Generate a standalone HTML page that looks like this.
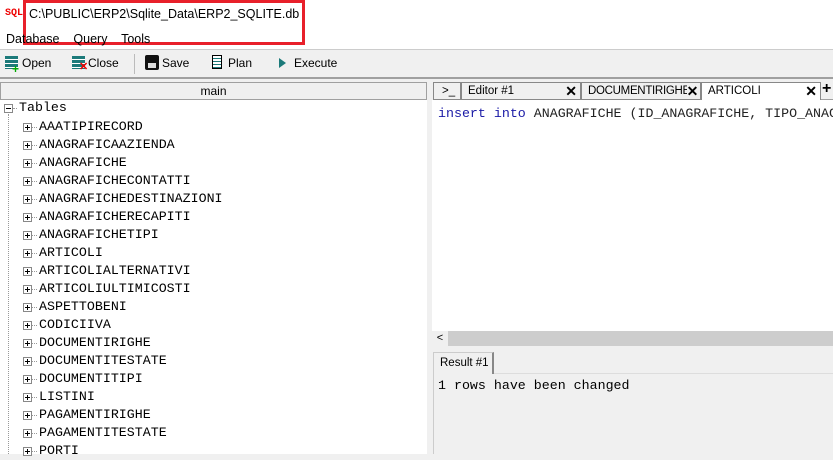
<!DOCTYPE html>
<html><head><style>
*{margin:0;padding:0;box-sizing:border-box}
body{width:833px;height:454px;overflow:hidden;background:#f0f0f0;font-family:"Liberation Sans",sans-serif;font-size:12px;color:#000;position:relative}
.abs{position:absolute}
.mono{font-family:"Liberation Mono",monospace;font-size:13.3px}
.tree div{position:absolute;left:39px;height:18px;line-height:18px;color:#000}
.pb{position:absolute;left:23px;width:9px;height:9px;border:1px solid #888;background:#fff}
.pb:before{content:"";position:absolute;left:1px;top:3px;width:5px;height:1px;background:#000}
.pb.p:after{content:"";position:absolute;left:3px;top:1px;width:1px;height:5px;background:#000}
.dh{position:absolute;left:32px;width:5px;border-top:1px dotted #999}
.tab{position:absolute;top:82px;height:18px;border:1px solid #888;line-height:16px;padding-left:6px;font-size:11.5px;white-space:nowrap;overflow:hidden}
.x{position:absolute;right:3px;top:0;font-weight:bold;font-size:14px}
</style></head><body>
<div class="abs" style="left:0;top:0;width:833px;height:50px;background:#fff"></div>
<div class="abs" style="left:5px;top:8px;color:#e00;font:bold 10px 'Liberation Mono',monospace;">SQL</div>
<div class="abs" style="left:23px;top:0;width:282px;height:45px;border:3px solid #e8202a"></div>
<div class="abs" style="left:29px;top:7px;font-size:12.5px">C:\PUBLIC\ERP2\Sqlite_Data\ERP2_SQLITE.db</div>
<div class="abs" style="left:6px;top:32px;font-size:12.5px">Database&nbsp;&nbsp;&nbsp; Query&nbsp;&nbsp;&nbsp; Tools</div>
<div class="abs" style="left:0;top:49px;width:833px;height:1px;background:#ccc"></div>
<div class="abs" style="left:5px;top:56px;width:13px;height:13px;background:repeating-linear-gradient(#1c7a7a 0 3px,#fff 3px 4px)"></div>
<div class="abs" style="left:12px;top:62px;color:#0a0;font:bold 12px sans-serif">+</div>
<div class="abs" style="left:22px;top:56px;font-size:12px">Open</div>
<div class="abs" style="left:72px;top:56px;width:13px;height:13px;background:repeating-linear-gradient(#1c7a7a 0 3px,#fff 3px 4px)"></div>
<div class="abs" style="left:79px;top:60px;color:#e00;font:bold 11px sans-serif">✕</div>
<div class="abs" style="left:88px;top:56px">Close</div>
<div class="abs" style="left:134px;top:54px;width:1px;height:20px;background:#bbb"></div>
<div class="abs" style="left:145px;top:55px;width:14px;height:15px;background:#111;border-radius:2px"></div>
<div class="abs" style="left:148px;top:63px;width:8px;height:5px;background:#ddd"></div>
<div class="abs" style="left:162px;top:56px">Save</div>
<div class="abs" style="left:212px;top:55px;width:10px;height:14px;border:1px solid #000;background:repeating-linear-gradient(#fff 0 2px,#1c7a7a 2px 3px)"></div>
<div class="abs" style="left:228px;top:56px">Plan</div>
<div class="abs" style="left:279px;top:58px;width:0;height:0;border-left:7px solid #1c7a7a;border-top:5px solid transparent;border-bottom:5px solid transparent"></div>
<div class="abs" style="left:294px;top:56px">Execute</div>
<div class="abs" style="left:0;top:77px;width:833px;height:2px;background:#a0a0a0"></div>
<div class="abs" style="left:0;top:82px;width:427px;height:18px;border:1px solid #a0a0a0;background:#f0f0f0;text-align:center;line-height:16px">main</div>
<div class="abs mono tree" style="left:0;top:100px;width:427px;height:354px;background:#fff">
<span class="pb" style="left:4px;top:4px"></span>
<span class="dh" style="left:13px;top:8px;width:4px"></span>
<div style="left:19px;top:-1px">Tables</div>
<span class="abs" style="left:8px;top:14px;height:340px;border-left:1px dotted #999"></span>
</div>
<div class="abs mono tree" id="t" style="left:0;top:100px;width:427px;height:354px"></div>
<div class="abs" style="left:433px;top:82px;width:400px;height:18px;border-bottom:1px solid #a0a0a0"></div>
<div class="tab" style="left:433px;width:28px;padding-left:8px">&gt;_</div>
<div class="tab" style="left:461px;width:120px">Editor #1<span class="x">✕</span></div>
<div class="tab" style="left:581px;width:120px;letter-spacing:-0.3px">DOCUMENTIRIGHE<span class="x" style="right:2px;background:#f0f0f0">✕</span></div>
<div class="tab" style="left:701px;width:120px;height:19px;border-bottom:none;background:#fff">ARTICOLI<span class="x">✕</span></div>
<div class="abs" style="left:822px;top:80px;font-weight:bold;font-size:16px">+</div>
<div class="abs" style="left:432px;top:100px;width:401px;height:231px;background:#fff"></div>
<div class="abs mono" style="left:438px;top:106px;white-space:nowrap;color:#222"><span style="color:#1a1aa6">insert into</span> ANAGRAFICHE (ID_ANAGRAFICHE, TIPO_ANAG</div>
<div class="abs" style="left:432px;top:331px;width:401px;height:15px;background:#cdcdcd"></div>
<div class="abs" style="left:432px;top:331px;width:16px;height:15px;background:#f0f0f0;font-size:11px;text-align:center;line-height:15px">&lt;</div>
<div class="abs" style="left:433px;top:373px;width:400px;height:81px;border-left:1px solid #ccc;border-top:1px solid #ddd"></div>
<div class="abs" style="left:433px;top:352px;width:61px;height:22px;border:1px solid #ccc;border-right:2px solid #888;border-bottom:none;background:#f0f0f0;line-height:20px;padding-left:6px;font-size:11.5px">Result #1</div>
<div class="abs mono" style="left:438px;top:378px">1 rows have been changed</div>
<script>
var n=["AAATIPIRECORD","ANAGRAFICAAZIENDA","ANAGRAFICHE","ANAGRAFICHECONTATTI","ANAGRAFICHEDESTINAZIONI","ANAGRAFICHERECAPITI","ANAGRAFICHETIPI","ARTICOLI","ARTICOLIALTERNATIVI","ARTICOLIULTIMICOSTI","ASPETTOBENI","CODICIIVA","DOCUMENTIRIGHE","DOCUMENTITESTATE","DOCUMENTITIPI","LISTINI","PAGAMENTIRIGHE","PAGAMENTITESTATE","PORTI"];
var h="";n.forEach(function(s,i){var y=18+i*18;h+='<div style="top:'+y+'px">'+s+'</div><span class="pb p" style="top:'+(y+5)+'px"></span><span class="dh" style="top:'+(y+9)+'px"></span>';});
document.getElementById("t").innerHTML=h;
</script>
</body></html>
